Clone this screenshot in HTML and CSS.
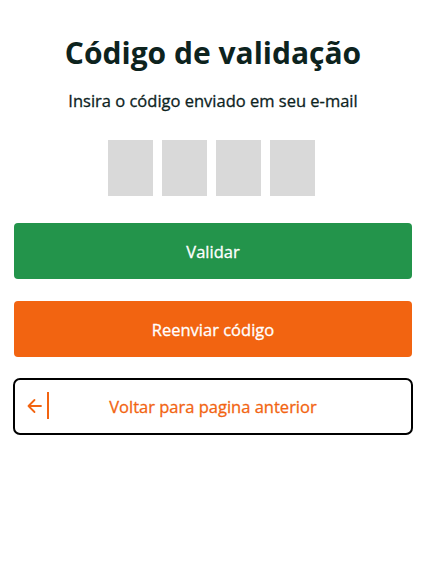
FILE: index.html
```html
<!DOCTYPE html>
<html lang="pt-BR">
<head>
<meta charset="utf-8">
<link rel="stylesheet" href="styles.css">
</head>
<body>
<main class="page">
  <h1 class="title">Código de validação</h1>
  <p class="subtitle">Insira o código enviado em seu e-mail</p>
  <div class="code">
    <div class="digit"></div>
    <div class="digit"></div>
    <div class="digit"></div>
    <div class="digit"></div>
  </div>
  <button class="btn btn-green">Validar</button>
  <button class="btn btn-orange">Reenviar código</button>
  <button class="btn btn-back">
    <svg class="back-icon" width="24" height="28" viewBox="0 0 24 28" fill="none" stroke="#f26411" stroke-width="1.8" stroke-linecap="round" stroke-linejoin="round">
      <path d="M1.5 14h12.5M7.5 8l-6 6 6 6"/>
      <path d="M21 0v27" stroke-width="2" stroke-linecap="butt"/>
    </svg>
    <span class="back-label">Voltar para pagina anterior</span>
  </button>
</main>
</body>
</html>
```
FILE: styles.css
```css
* { box-sizing: border-box; }
html, body { margin: 0; background: #fff; }
body { font-family: "Open Sans", "Noto Sans", sans-serif; }
.page {
  display: flex;
  flex-direction: column;
  align-items: stretch;
  padding: 33px 16px 0 14px;
}
.title {
  margin: 0;
  text-align: center;
  font-size: 30px;
  font-weight: 700;
  line-height: 40px;
  color: #0d231e;
}
.subtitle {
  margin: 17px 0 0;
  text-align: center;
  font-size: 16.5px;
  font-weight: 400;
  -webkit-text-stroke: 0.3px currentColor;
  line-height: 22px;
  color: #0d231e;
}
.code {
  display: flex;
  justify-content: center;
  gap: 9px;
  margin-top: 28px;
  padding-right: 3px;
}
.digit {
  width: 45px;
  height: 56px;
  background: #d9d9d9;
}
.btn {
  font-family: inherit;
  border: none;
  height: 56px;
  border-radius: 4px;
  font-size: 16.5px;
  font-weight: 400;
  -webkit-text-stroke: 0.3px currentColor;
  color: #fff;
  display: flex;
  align-items: center;
  justify-content: center;
  padding: 0;
  width: 100%;
}
.btn-green { background: #23944b; margin-top: 27px; }
.btn-orange { background: #f26411; margin-top: 22px; }
.btn-back {
  position: relative;
  margin: 21px -1px 0;
  width: auto;
  height: 57px;
  background: #fff;
  border: 2px solid #000;
  border-radius: 7px;
  color: #f26411;
}
.back-icon {
  position: absolute;
  left: 12px;
  top: 12px;
}
.back-label { display: block; }
```
